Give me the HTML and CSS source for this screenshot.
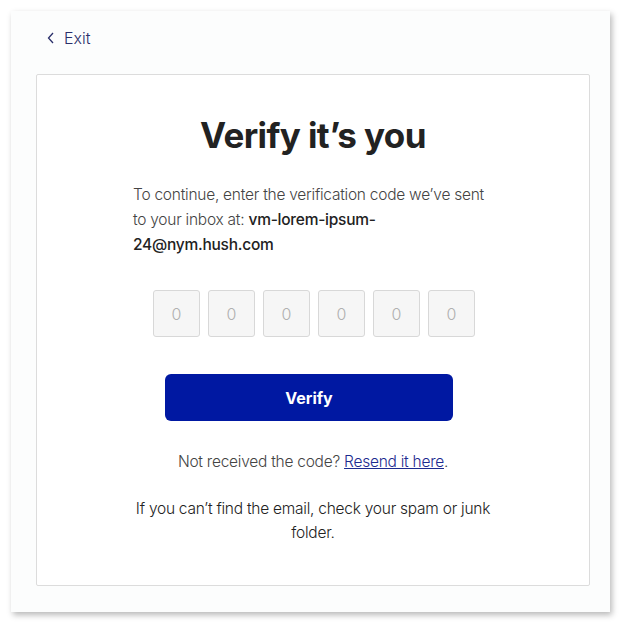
FILE: index.html
```html
<!DOCTYPE html>
<html lang="en">
<head>
<meta charset="utf-8">
<link rel="stylesheet" href="styles.css">
</head>
<body>
<div class="panel">
  <a class="exit" href="#">
    <svg class="chev" width="8" height="12" viewBox="0 0 8 12"><path d="M6 1 L1.5 6 L6 11" fill="none" stroke="#2a2f6a" stroke-width="1.3"/></svg>
    <span>Exit</span>
  </a>
  <div class="card">
    <h1 class="title">Verify it’s you</h1>
    <p class="lead">To continue, enter the verification code we’ve sent to your inbox at: <strong>vm-lorem-ipsum-24@nym.hush.com</strong></p>
    <div class="codes">
      <div class="digit">0</div>
      <div class="digit">0</div>
      <div class="digit">0</div>
      <div class="digit">0</div>
      <div class="digit">0</div>
      <div class="digit">0</div>
    </div>
    <button class="verify">Verify</button>
    <p class="resend">Not received the code? <a href="#">Resend it here</a>.</p>
    <p class="hint">If you can’t find the email, check your spam or junk folder.</p>
  </div>
</div>
</body>
</html>
```
FILE: styles.css
```css
html, body {
  margin: 0;
  padding: 0;
  background: #ffffff;
}
body {
  padding: 11px 19px 20px 11px;
  font-family: Inter, "Liberation Sans", sans-serif;
}
.panel {
  width: 599px;
  height: 601px;
  box-sizing: border-box;
  background: #fcfdfd;
  box-shadow: 2px 3px 6px rgba(0,0,0,0.28);
  padding: 15px 20px 26px 25px;
  display: flex;
  flex-direction: column;
}
.exit {
  display: flex;
  align-items: center;
  gap: 9px;
  margin-left: 11px;
  height: 24px;
  color: #2a2f6a;
  text-decoration: none;
  font-size: 16px;
  font-weight: 300;
  width: max-content;
}
.exit span { line-height: 24px; }
.card {
  margin-top: 24px;
  flex: 1;
  background: #ffffff;
  border: 1px solid #dcdcdc;
  border-radius: 2px;
  display: flex;
  flex-direction: column;
  align-items: center;
}
.title {
  margin: 38px 0 0;
  font-size: 35px;
  font-weight: 700;
  color: #222;
  letter-spacing: -0.6px;
  line-height: 44px;
}
.lead {
  margin: 25px 0 0;
  width: 360px;
  font-size: 15.5px;
  font-weight: 300;
  letter-spacing: -0.25px;
  line-height: 25px;
  color: #444;
}
.lead strong {
  font-weight: 500;
  color: #222;
}
.codes {
  margin-top: 33px;
  margin-left: 2px;
  display: flex;
  gap: 8px;
}
.digit {
  width: 45px;
  height: 45px;
  background: #f6f6f6;
  border: 1px solid #d8d8d8;
  border-radius: 3px;
  display: flex;
  align-items: center;
  justify-content: center;
  color: #b0b0b0;
  font-size: 16px;
  font-weight: 300;
}
.verify {
  margin-top: 37px;
  margin-right: 8px;
  width: 288px;
  height: 47px;
  border: none;
  border-radius: 6px;
  background: #0018a2;
  color: #fff;
  font-family: inherit;
  font-size: 16px;
  font-weight: 700;
}
.resend {
  margin: 29px 0 0;
  font-size: 15.5px;
  font-weight: 300;
  letter-spacing: -0.25px;
  line-height: 24px;
  color: #444;
}
.resend a {
  color: #1c2a8f;
}
.hint {
  margin: 23px 0 0;
  width: 360px;
  text-align: center;
  font-size: 15.5px;
  font-weight: 300;
  letter-spacing: -0.25px;
  line-height: 24px;
  color: #222;
}
```
